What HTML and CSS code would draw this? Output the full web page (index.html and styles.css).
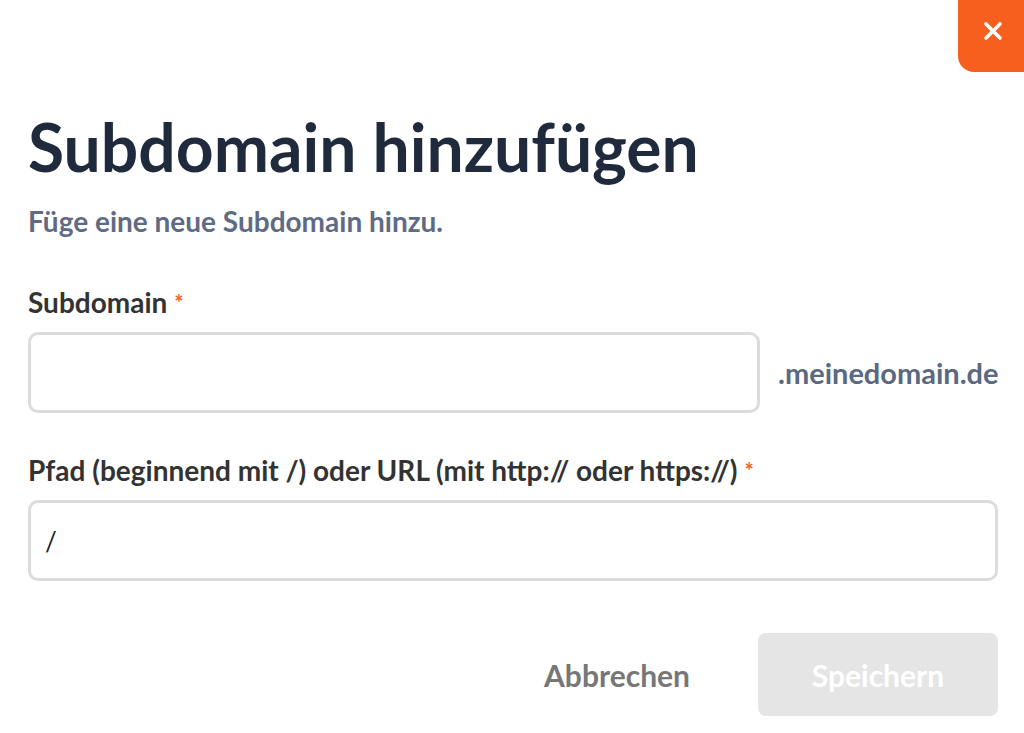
FILE: index.html
```html
<!DOCTYPE html>
<html lang="de">
<head>
    <meta charset="utf-8">
    <title>Subdomain hinzufügen</title>
    <link rel="stylesheet" href="styles.css">
</head>
<body>
    <button class="close" type="button" aria-label="Schließen">
        <svg width="22" height="22" viewBox="0 0 22 22">
            <path d="M4 4 L18 18 M18 4 L4 18" stroke="#fff" stroke-width="3.6" stroke-linecap="round"/>
        </svg>
    </button>

    <main class="dialog">
        <h1>Subdomain hinzufügen</h1>
        <p class="subtitle">Füge eine neue Subdomain hinzu.</p>

        <form class="form">
            <label class="label" for="subdomain">Subdomain <span class="req">*</span></label>
            <div class="row">
                <input type="text" id="subdomain" class="input input-short">
                <span class="suffix">.meinedomain.de</span>
            </div>

            <label class="label label-second" for="path">Pfad (beginnend mit /) oder URL (mit http:// oder https://) <span class="req">*</span></label>
            <input type="text" id="path" class="input" value="/">

            <div class="actions">
                <button type="button" class="btn-cancel">Abbrechen</button>
                <button type="submit" class="btn-save" disabled>Speichern</button>
            </div>
        </form>
    </main>
</body>
</html>
```

FILE: styles.css
```css
body {
    margin: 0;
    background: #fff;
    font-family: Lato, "Open Sans", sans-serif;
    color: #1f2a3d;
}
.close {
    position: absolute;
    top: 0;
    right: 0;
    width: 66px;
    height: 72px;
    border: none;
    border-bottom-left-radius: 16px;
    background-color: #f65f1e;
    display: flex;
    align-items: center;
    justify-content: center;
    padding: 0 0 10px 4px;
    cursor: pointer;
}
.dialog {
    padding: 107px 26px 0 28px;
}
h1 {
    margin: 0;
    font-size: 66px;
    line-height: 1.2;
    font-weight: 700;
    color: #1f2a3d;
}
.subtitle {
    margin: 18px 0 0;
    font-size: 28px;
    line-height: 34px;
    font-weight: 700;
    color: #5f6b85;
}
.form {
    margin-top: 47px;
}
.label {
    display: block;
    font-size: 28px;
    line-height: 34px;
    font-weight: 700;
    color: #333;
}
.label-second {
    margin-top: 40px;
}
.req {
    color: #f65f1e;
    font-size: 22px;
    vertical-align: 2px;
}
.row {
    display: flex;
    align-items: center;
    gap: 18px;
}
.input {
    box-sizing: border-box;
    display: block;
    width: 100%;
    height: 81px;
    margin-top: 12px;
    padding: 0 14px;
    border: 3px solid #dcdcdc;
    border-radius: 10px;
    font-family: Lato, sans-serif;
    font-size: 26px;
    color: #222;
    background: #fff;
}
.input-short {
    width: 732px;
    flex: none;
}
.row .suffix {
    margin-top: 12px;
    font-size: 29px;
    font-weight: 700;
    color: #5b6882;
}
.actions {
    display: flex;
    justify-content: flex-end;
    align-items: center;
    gap: 68px;
    margin-top: 52px;
}
.btn-cancel {
    border: none;
    background: none;
    padding: 0;
    font-family: Lato, sans-serif;
    font-size: 30px;
    font-weight: 700;
    color: #777;
    cursor: pointer;
}
.btn-save {
    width: 240px;
    height: 83px;
    border: none;
    border-radius: 8px;
    background-color: #e5e5e5;
    font-family: Lato, sans-serif;
    font-size: 30px;
    font-weight: 700;
    color: #fff;
}
```
